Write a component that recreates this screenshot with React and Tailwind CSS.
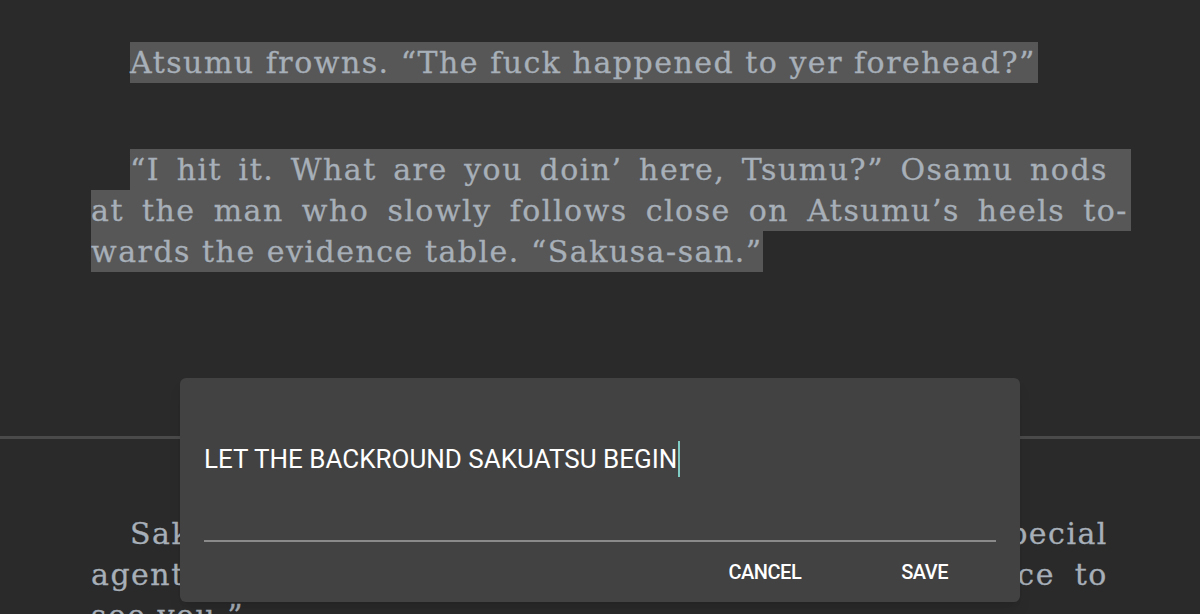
const SERIF = { fontFamily: '"DejaVu Serif", "Liberation Serif", serif' }

function Line({ children, indent, justify = true, hl = true, pr = 'pr-[23px]' }) {
  return (
    <div className={`flex ${indent ? 'ml-[39px]' : ''}`}>
      <div
        className={`h-[41px] leading-[41px] whitespace-nowrap ${hl ? 'bg-[#575757]' : ''} ${
          justify ? `flex-1 flex justify-between ${pr}` : ''
        }`}
      >
        {justify
          ? children.split(' ').map((w, i) => <span key={i}>{w}</span>)
          : children}
      </div>
    </div>
  )
}

export default function App() {
  return (
    <div className="relative w-[1200px] h-[614px] overflow-hidden bg-[#2a2a2a]">
      <div
        className="pt-[42px] px-[91px] w-[1040px] box-content text-[30px] text-[#a7afb8] tracking-[1.5px] [-webkit-text-stroke:0.3px_#a7afb8]"
        style={SERIF}
      >
        <div className="flex ml-[39px]">
          <div className="h-[41px] leading-[41px] bg-[#575757] pr-[2px] whitespace-nowrap">
            Atsumu frowns. “The fuck happened to yer forehead?”
          </div>
        </div>

        <div className="mt-[66px]">
          <Line indent>“I hit it. What are you doin’ here, Tsumu?” Osamu nods</Line>
          <Line pr="pr-[3px]">at the man who slowly follows close on Atsumu’s heels to-</Line>
          <Line justify={false}>wards the evidence table. “Sakusa-san.” </Line>
        </div>
      </div>

      <div className="mt-[164px] h-[3px] bg-[#4a4a4a]" />

      <div
        className="mt-[74px] px-[91px] w-[1040px] box-content text-[30px] text-[#a7afb8] tracking-[1.5px] [-webkit-text-stroke:0.3px_#a7afb8]"
        style={SERIF}
      >
        <Line indent hl={false}>Sakusa nods back at him. “Miya-san said that the special</Line>
        <Line hl={false}>agent in charge of this case sent him from the office to</Line>
        <Line hl={false} justify={false}>see you.”</Line>
      </div>

      <div className="absolute left-[180px] top-[378px] w-[840px] h-[224px] rounded-[6px] bg-[#424242] shadow-lg">
        <div className="px-[24px] pt-[63px]">
          <div
            className="flex items-center h-[36px] text-[26px] text-white"
            style={{ fontFamily: 'Roboto, "Noto Sans", sans-serif' }}
          >
            <span>LET THE BACKROUND SAKUATSU BEGIN</span>
            <span className="ml-[1px] w-[2px] h-[36px] bg-[#80cbc4]" />
          </div>
          <div className="mt-[63px] h-[2px] bg-[#8a8a8a]" />
        </div>
        <div
          className="flex justify-end pr-[72px] mt-[15px] gap-[100px] text-[20px] font-medium text-white tracking-[-0.5px]"
          style={{ fontFamily: 'Roboto, "Noto Sans", sans-serif' }}
        >
          <span>CANCEL</span>
          <span>SAVE</span>
        </div>
      </div>
    </div>
  )
}
